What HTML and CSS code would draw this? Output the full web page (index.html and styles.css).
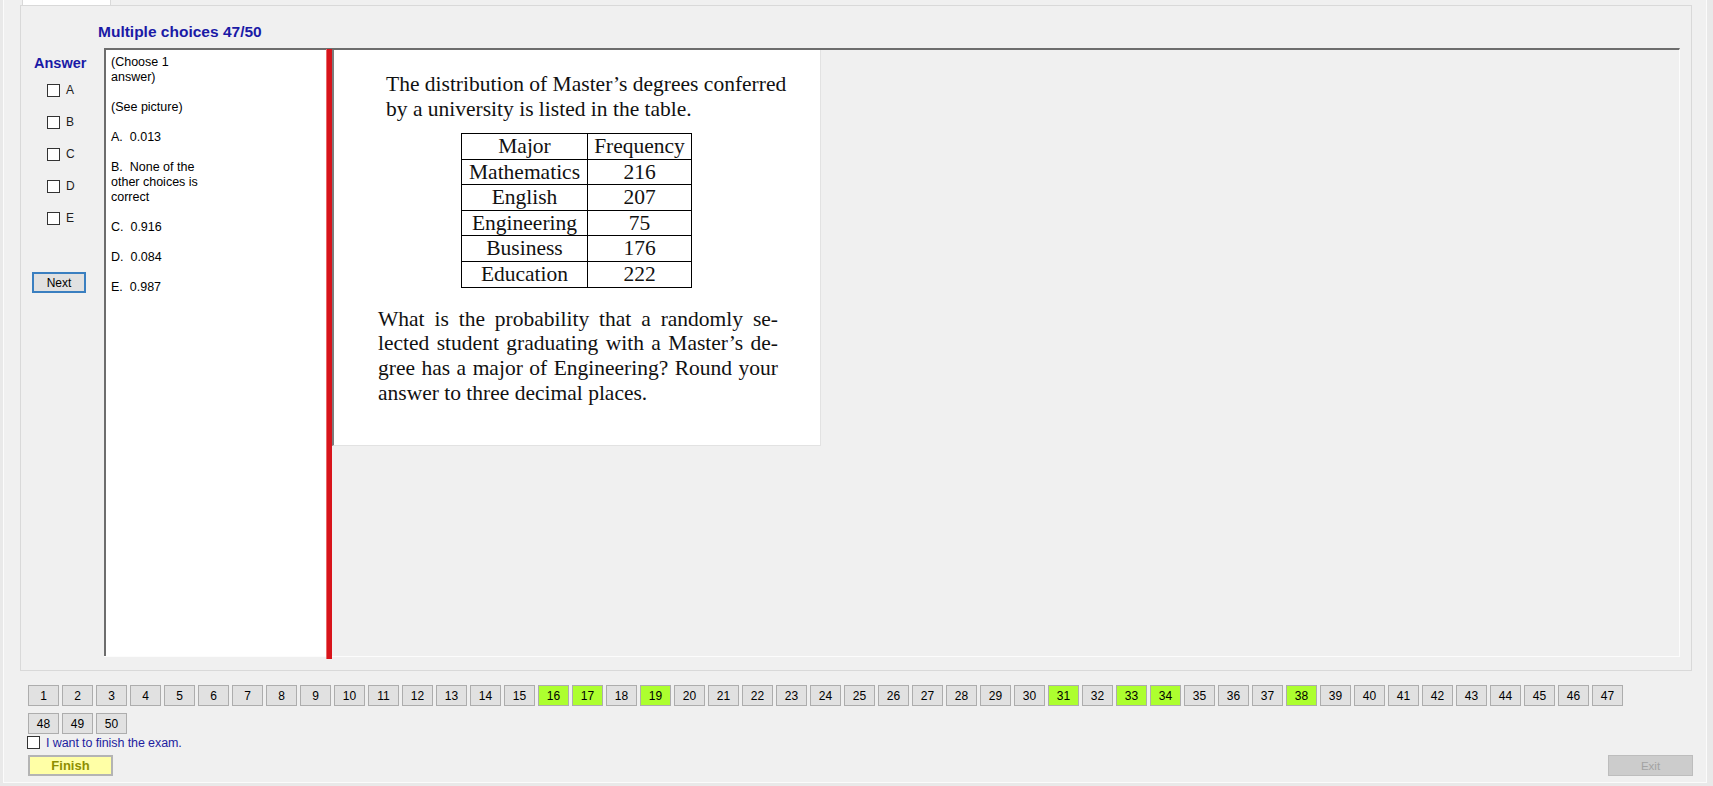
FILE: index.html
```html
<!DOCTYPE html>
<html>
<head>
<meta charset="utf-8">
<title>Exam</title>
<link rel="stylesheet" href="styles.css">
</head>
<body>
<div class="window">
  <div class="tabstrip"><div class="tab"></div></div>
  <div class="tabpage">
    <div class="title">Multiple choices 47/50</div>
    <div class="main">
      <div class="answer-col">
        <div class="answer-label">Answer</div>
        <ul class="checks">
          <li><span class="cb"></span>A</li>
          <li><span class="cb"></span>B</li>
          <li><span class="cb"></span>C</li>
          <li><span class="cb"></span>D</li>
          <li><span class="cb"></span>E</li>
        </ul>
        <button class="next">Next</button>
      </div>
      <div class="panel">
        <div class="listbox">
          <p>(Choose 1 answer)</p>
          <p>(See picture)</p>
          <p>A.&nbsp; 0.013</p>
          <p>B.&nbsp; None of the other choices is correct</p>
          <p>C.&nbsp; 0.916</p>
          <p>D.&nbsp; 0.084</p>
          <p>E.&nbsp; 0.987</p>
        </div>
        <div class="splitter"></div>
        <div class="picture-area">
          <div class="picture">
            <div class="para1">
              <span class="line">The distribution of Master’s degrees conferred</span>
              <span class="line">by a university is listed in the table.</span>
            </div>
            <table class="freq">
              <tr><td class="c1">Major</td><td class="c2">Frequency</td></tr>
              <tr><td class="c1">Mathematics</td><td class="c2">216</td></tr>
              <tr><td class="c1">English</td><td class="c2">207</td></tr>
              <tr><td class="c1">Engineering</td><td class="c2">75</td></tr>
              <tr><td class="c1">Business</td><td class="c2">176</td></tr>
              <tr><td class="c1">Education</td><td class="c2">222</td></tr>
            </table>
            <div class="para2">
              <span class="jline">What is the probability that a randomly se-</span>
              <span class="jline">lected student graduating with a Master’s de-</span>
              <span class="jline">gree has a major of Engineering? Round your</span>
              <span class="lline">answer to three decimal places.</span>
            </div>
          </div>
        </div>
      </div>
    </div>
  </div>
  <div class="footer">
    <div class="qgrid">
      <button class="q">1</button><button class="q">2</button><button class="q">3</button><button class="q">4</button><button class="q">5</button><button class="q">6</button><button class="q">7</button><button class="q">8</button><button class="q">9</button><button class="q">10</button>
      <button class="q">11</button><button class="q">12</button><button class="q">13</button><button class="q">14</button><button class="q">15</button><button class="q done">16</button><button class="q done">17</button><button class="q">18</button><button class="q done">19</button><button class="q">20</button>
      <button class="q">21</button><button class="q">22</button><button class="q">23</button><button class="q">24</button><button class="q">25</button><button class="q">26</button><button class="q">27</button><button class="q">28</button><button class="q">29</button><button class="q">30</button>
      <button class="q done">31</button><button class="q">32</button><button class="q done">33</button><button class="q done">34</button><button class="q">35</button><button class="q">36</button><button class="q">37</button><button class="q done">38</button><button class="q">39</button><button class="q">40</button>
      <button class="q">41</button><button class="q">42</button><button class="q">43</button><button class="q">44</button><button class="q">45</button><button class="q">46</button><button class="q">47</button><button class="q">48</button><button class="q">49</button><button class="q">50</button>
    </div>
    <div class="finish-check"><span class="cb"></span><span class="fc-text">I want to finish the exam.</span></div>
    <div class="actions">
      <button class="finish">Finish</button>
      <button class="exit">Exit</button>
    </div>
  </div>
</div>
</body>
</html>
```
FILE: styles.css
```css
html, body {
  margin: 0;
  padding: 0;
  background: #e9e9e9;
  width: 1713px;
  height: 786px;
  overflow: hidden;
  font-family: "Liberation Sans", Arial, sans-serif;
}

.window {
  margin-left: 3px;
  width: 1704px;
  height: 783px;
  box-sizing: border-box;
  background: #f0f0f0;
  border-left: 1px solid #fbfbfb;
  border-right: 1px solid #fbfbfb;
  border-bottom: 1px solid #fbfbfb;
  padding-left: 16px;
}

.tabstrip {
  height: 5px;
  width: 1672px;
  padding-left: 2px;
  box-sizing: border-box;
}

.tab {
  width: 89px;
  height: 5px;
  background: #ffffff;
  border-left: 1px solid #d9d9d9;
  border-right: 1px solid #d9d9d9;
  box-sizing: border-box;
}

.tabpage {
  width: 1672px;
  height: 666px;
  box-sizing: border-box;
  border: 1px solid #d9d9d9;
  background: #f0f0f0;
}

.title {
  height: 42px;
  box-sizing: border-box;
  padding: 17px 0 0 77px;
  line-height: 18px;
  font-size: 15.5px;
  font-weight: bold;
  color: #1a1aa6;
}

.main {
  display: flex;
  height: 609px;
}

.answer-col {
  width: 83px;
  flex: none;
}

.answer-label {
  margin: 6px 0 0 13px;
  line-height: 18px;
  font-size: 14.5px;
  font-weight: bold;
  color: #1a1aa6;
}

.checks {
  list-style: none;
  margin: 2px 0 0 26px;
  padding: 0;
}

.checks li {
  display: flex;
  align-items: center;
  height: 32px;
  font-size: 12px;
  color: #202020;
}

.cb {
  display: inline-block;
  width: 13px;
  height: 13px;
  box-sizing: border-box;
  border: 1px solid #333333;
  background: #ffffff;
  margin-right: 6px;
  flex: none;
}

.next {
  display: block;
  margin: 38px 0 0 11px;
  width: 54px;
  height: 21px;
  padding: 0;
  border: 2px solid #3a7fc0;
  background: #e1e1e1;
  font-family: "Liberation Sans", Arial, sans-serif;
  font-size: 12px;
  color: #000;
}

.panel {
  width: 1576px;
  height: 609px;
  box-sizing: border-box;
  display: flex;
  border-top: 2px solid #6d6d6d;
  border-right: 1px solid #fcfcfc;
  border-bottom: 1px solid #fcfcfc;
}

.listbox {
  width: 222px;
  flex: none;
  box-sizing: border-box;
  background: #ffffff;
  border-left: 2px solid #6d6d6d;
  padding: 5px 0 0 5px;
}

.listbox p {
  margin: 0 0 15px;
  width: 96px;
  font-size: 12.5px;
  line-height: 15px;
  color: #000;
}

.splitter {
  width: 6px;
  flex: none;
  background: #d8141b;
  border-left: 1px solid #e86a6a;
  box-sizing: border-box;
  margin-top: -1px;
  margin-bottom: -3px;
}

.picture-area {
  flex: 1;
  background: #f0f0f0;
}

.picture {
  width: 489px;
  height: 396px;
  box-sizing: border-box;
  background: #ffffff;
  border-left: 2px solid #7c7c7c;
  border-right: 1px solid #e2e2e2;
  border-bottom: 1px solid #e2e2e2;
  padding: 22px 0 0 44px;
  font-family: "Liberation Serif", "Times New Roman", serif;
  font-size: 21.5px;
  color: #111;
}

.para1 {
  margin-left: 8px;
  line-height: 25px;
}

.line {
  display: block;
  white-space: nowrap;
}

.freq {
  border-collapse: collapse;
  margin: 11px 0 0 83px;
  line-height: 24.6px;
}

.freq td {
  border: 1px solid #000;
  padding: 0;
  text-align: center;
}

.freq .c1 {
  width: 125px;
}

.freq .c2 {
  width: 103px;
}

.para2 {
  margin-top: 19px;
  width: 400px;
  line-height: 24.7px;
}

.jline {
  display: block;
  text-align: justify;
  text-align-last: justify;
}

.lline {
  display: block;
  text-align: left;
}

.footer {
  padding: 14px 0 0 8px;
}

.qgrid {
  display: flex;
  flex-wrap: wrap;
  gap: 7px 3px;
  width: 1600px;
}

.q {
  width: 31px;
  height: 21px;
  padding: 0;
  border: 1px solid #adadad;
  background: #e1e1e1;
  font-family: "Liberation Sans", Arial, sans-serif;
  font-size: 12px;
  color: #000;
}

.q.done {
  background: #adff2f;
}

.finish-check {
  display: flex;
  align-items: center;
  height: 13px;
  margin: 2px 0 0 -1px;
}

.fc-text {
  font-size: 12.5px;
  color: #1e1ea0;
  letter-spacing: -0.1px;
}

.actions {
  display: flex;
  justify-content: space-between;
  width: 1665px;
  margin-top: 6px;
}

.finish {
  width: 85px;
  height: 21px;
  padding: 0;
  border: 2px solid #b4b4b4;
  background: #ffffa6;
  font-family: "Liberation Sans", Arial, sans-serif;
  font-size: 13px;
  font-weight: bold;
  color: #8e8e00;
}

.exit {
  width: 85px;
  height: 21px;
  padding: 0;
  border: 1px solid #bdbdbd;
  background: #cccccc;
  font-family: "Liberation Sans", Arial, sans-serif;
  font-size: 11.5px;
  color: #a3a3a3;
}
```
